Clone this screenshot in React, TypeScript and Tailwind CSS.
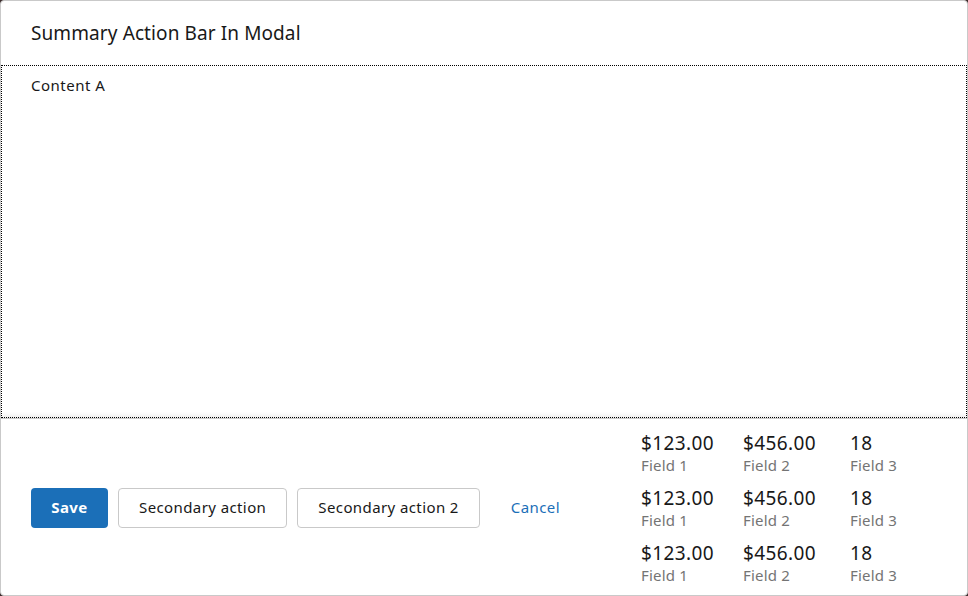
import React from 'react';

// ─── Data ─────────────────────────────────────────────────────────────────────

const SUMMARY_ROWS = [0, 1, 2].map(() => [
  { value: '$123.00', label: 'Field 1' },
  { value: '$456.00', label: 'Field 2' },
  { value: '18', label: 'Field 3' },
]);

// ─── Component ────────────────────────────────────────────────────────────────

export default function App() {
  return (
    <div className="w-[968px] h-[596px] bg-[#3b2b2b] font-['Noto_Sans',sans-serif]">
      <div className="w-full h-full flex flex-col bg-white border border-[#c9c9c9] rounded-[4px] overflow-hidden">
        {/* Header */}
        <div className="h-[64px] flex items-center px-[30px] shrink-0">
          <h2 className="text-[19px] tracking-[0.1px] text-[#181818] leading-none">Summary Action Bar In Modal</h2>
        </div>

        {/* Content */}
        <div className="flex-1 outline-1 outline-dotted outline-black -outline-offset-1 px-[30px] pt-[9px]">
          <p className="text-[15px] tracking-[0.5px] text-[#181818]">Content A</p>
        </div>

        {/* Footer */}
        <div className="h-[177px] shrink-0 border-t border-[#c9c9c9] shadow-[0_-3px_4px_rgba(0,0,0,0.07)] flex items-center px-[30px]">
          <div className="flex-1 flex items-center gap-[10px] text-[15px] tracking-[0.4px] pt-[1px]">
            <button className="h-[40px] w-[77px] rounded-[4px] bg-[#1b6fb8] text-white font-bold">
              Save
            </button>
            <button className="h-[40px] px-[20px] rounded-[4px] border border-[#c9c9c9] bg-white text-[#181818]">
              Secondary action
            </button>
            <button className="h-[40px] px-[20px] rounded-[4px] border border-[#c9c9c9] bg-white text-[#181818]">
              Secondary action 2
            </button>
            <button className="h-[40px] px-[21px] text-[#1b6fb8]">Cancel</button>
          </div>

          <div className="flex flex-col gap-[10px] mr-[39px]">
            {SUMMARY_ROWS.map((row, i) => (
              <div key={i} className="grid grid-cols-[72px_77px_48px] gap-x-[30px]">
                {row.map(f => (
                  <div key={f.label} className="flex flex-col">
                    <span className="pt-[2px] text-[19px] tracking-[0.4px] leading-[23px] text-[#181818] whitespace-nowrap">{f.value}</span>
                    <span className="text-[15px] tracking-[0.2px] leading-[20px] text-[#747474] whitespace-nowrap">{f.label}</span>
                  </div>
                ))}
              </div>
            ))}
          </div>
        </div>
      </div>
    </div>
  );
}
